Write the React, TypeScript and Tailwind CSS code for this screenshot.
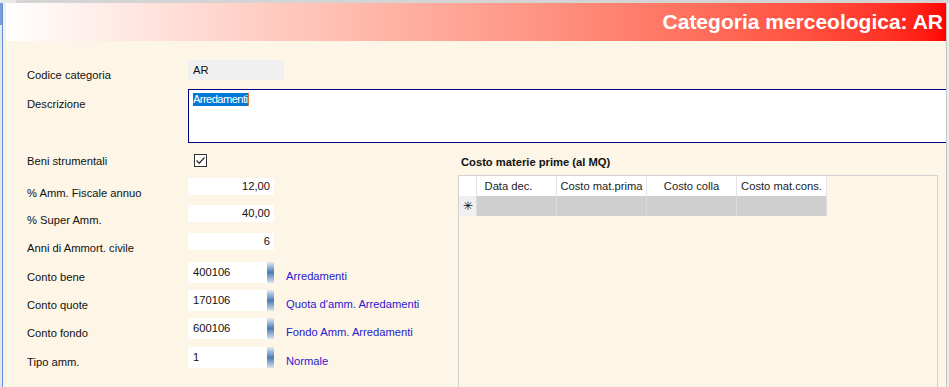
import React from 'react';

const font = { fontFamily: '"Liberation Sans", Arial, sans-serif' };

function Label({ text, top = 'mt-[8px]' }: { text: string; top?: string }) {
  return <div className={`w-[161px] shrink-0 leading-[14px] text-[#111] ${top}`}>{text}</div>;
}

function NumberField({ value }: { value: string }) {
  return (
    <div className="w-[86px] h-[17px] bg-white text-right pr-[4px] pt-[1px] leading-[14px] text-[#111]">
      {value}
    </div>
  );
}

function LookupField({ code, desc }: { code: string; desc: string }) {
  return (
    <div className="flex items-start">
      <div className="w-[79px] h-[21px] bg-white pl-[5px] pt-[3px] leading-[14px] text-[#111]">{code}</div>
      <div className="w-[7px] h-[21px] bg-gradient-to-b from-[#e2ebf4] via-[#4a7cb3] to-[#dbe5ef]" />
      <div className="ml-[12px] pt-[7px] leading-[14px] text-[#2a17cf]">{desc}</div>
    </div>
  );
}

export default function App() {
  const cols = [
    { name: 'Data dec.', w: 'w-[80px]', pad: 'pr-[16px]' },
    { name: 'Costo mat.prima', w: 'w-[90px]', pad: '' },
    { name: 'Costo colla', w: 'w-[90px]', pad: '' },
    { name: 'Costo mat.cons.', w: 'w-[90px]', pad: '' },
  ];

  return (
    <div className="w-[949px] h-[387px] flex flex-col overflow-hidden bg-white text-[11.2px]" style={font}>
      {/* top strip */}
      <div className="flex h-[3px] shrink-0">
        <div className="w-[16px] bg-[#e8e8e8]" />
        <div className="flex-1 bg-[#d4d4d4]" />
      </div>

      <div className="flex flex-1 min-h-0">
        {/* left edge */}
        <div className="flex w-[6px] shrink-0">
          <div className="w-[2px] bg-[#e6e6e6] flex flex-col">
            <div className="h-[22px] bg-[#7c9fcc]" />
          </div>
          <div className="w-[1px] bg-[#5f92d8]" />
          <div className="w-[3px] bg-[#f2f2f2]" />
        </div>

        <div className="flex-1 flex flex-col min-w-0">
          {/* header */}
          <div className="h-[38px] shrink-0 flex items-center justify-end pr-[3px] pb-[2px] bg-gradient-to-r from-white to-[#ff0000]">
            <span className="text-white font-bold text-[21px] leading-none">Categoria merceologica: AR</span>
          </div>

          {/* body */}
          <div className="flex-1 flex flex-col bg-[#fdf5e6] overflow-hidden">
            <div className="flex items-start pl-[21px] mt-[19px] h-[20px]">
              <Label text="Codice categoria" />
              <div className="w-[96px] h-[20px] bg-[#f0f0f0] pl-[5px] pt-[3px] leading-[14px] text-[#111]">AR</div>
            </div>

            <div className="flex items-start pl-[21px] mt-[9px] h-[54px]">
              <Label text="Descrizione" />
              <div className="w-[800px] h-[54px] shrink-0 bg-white border border-[#000080] pl-[4px] pt-[1px]">
                <span className="inline-block bg-[#0078d7] text-white leading-[13px] tracking-[-0.6px] pr-[1px] border-r border-[#e0702a]">Arredamenti</span>
              </div>
            </div>

            <div className="flex flex-1">
              {/* left form */}
              <div className="w-[452px] shrink-0 pl-[21px] flex flex-col">
                <div className="flex items-start mt-[11px] h-[13px]">
                  <Label text="Beni strumentali" top="mt-[0px]" />
                  <div className="ml-[6px] w-[13px] h-[13px] border border-[#333] bg-white flex items-center justify-center">
                    <svg width="11" height="11" viewBox="0 0 11 11">
                      <path d="M1.5 5.5 L4.2 8.2 L9.5 2.5" fill="none" stroke="#333" strokeWidth="1.3" />
                    </svg>
                  </div>
                </div>
                <div className="flex items-start mt-[11px] h-[17px]">
                  <Label text="% Amm. Fiscale annuo" />
                  <NumberField value="12,00" />
                </div>
                <div className="flex items-start mt-[10px] h-[17px]">
                  <Label text="% Super Amm." />
                  <NumberField value="40,00" />
                </div>
                <div className="flex items-start mt-[11px] h-[17px]">
                  <Label text="Anni di Ammort. civile" />
                  <NumberField value="6" />
                </div>
                <div className="flex items-start mt-[12px] h-[21px]">
                  <Label text="Conto bene" />
                  <LookupField code="400106" desc="Arredamenti" />
                </div>
                <div className="flex items-start mt-[7px] h-[21px]">
                  <Label text="Conto quote" />
                  <LookupField code="170106" desc="Quota d'amm. Arredamenti" />
                </div>
                <div className="flex items-start mt-[7px] h-[21px]">
                  <Label text="Conto fondo" />
                  <LookupField code="600106" desc="Fondo Amm. Arredamenti" />
                </div>
                <div className="flex items-start mt-[8px] h-[21px]">
                  <Label text="Tipo amm." />
                  <LookupField code="1" desc="Normale" />
                </div>
              </div>

              {/* right grid */}
              <div className="flex-1 flex flex-col">
                <div className="mt-[12px] ml-[3px] leading-[14px] font-bold text-[#111]">
                  Costo materie prime (al MQ)
                </div>
                <div className="mt-[6px] w-[480px] flex-1 border-l border-t border-r border-[#d2d2d2] flex flex-col">
                  <div className="flex h-[20px]">
                    <div className="w-[18px] bg-white border-r border-[#e4e4e4]" />
                    {cols.map((c) => (
                      <div
                        key={c.name}
                        className={`${c.w} ${c.pad} bg-white border-r border-[#e4e4e4] flex items-center justify-center leading-[14px] text-[#1c1c1c]`}
                      >
                        {c.name}
                      </div>
                    ))}
                  </div>
                  <div className="flex h-[20px]">
                    <div className="w-[18px] bg-[#f0f0f0] border-r border-[#dcdcdc] flex items-center justify-center text-[12px] leading-none text-[#111]">
                      ✳
                    </div>
                    {cols.map((c) => (
                      <div key={c.name} className={`${c.w} bg-[#cfcfcf] border-r border-[#dadada]`} />
                    ))}
                  </div>
                </div>
              </div>
            </div>
          </div>
        </div>

        {/* right edge */}
        <div className="flex w-[3px] shrink-0">
          <div className="w-[1px] bg-[#c4c4c4]" />
          <div className="w-[2px] bg-[#ededed]" />
        </div>
      </div>
    </div>
  );
}
